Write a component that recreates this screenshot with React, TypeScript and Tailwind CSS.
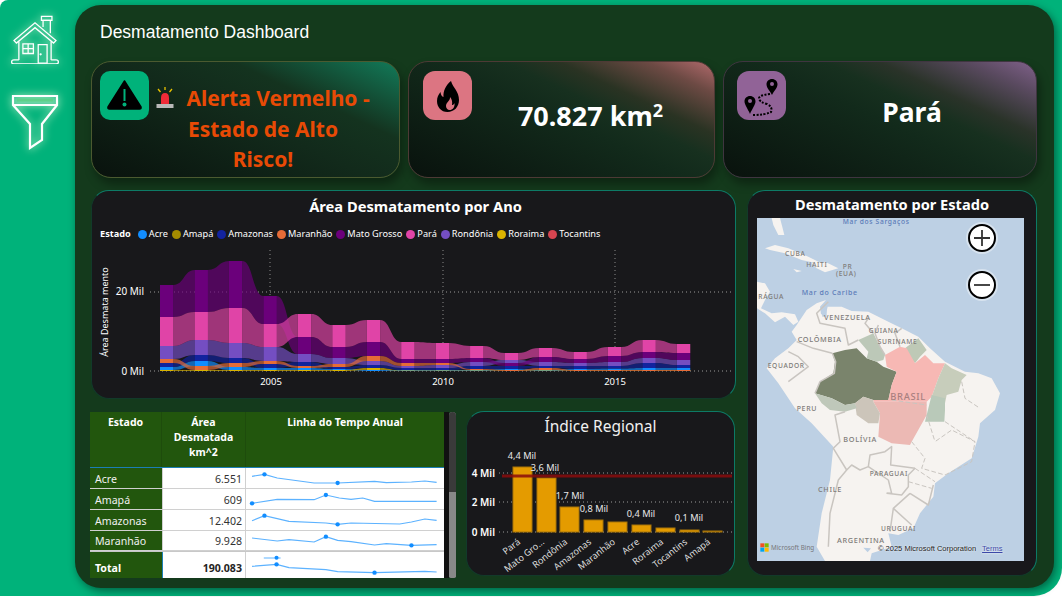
const SEGOE = 'font-["Noto_Sans","Open_Sans",sans-serif]';

const COLORS: Record<string, string> = {
  acre: '#118dff',
  amapa: '#a48b00',
  amazonas: '#12239e',
  maranhao: '#e66c37',
  matoGrosso: '#6b007b',
  para: '#e044a7',
  rondonia: '#744ec2',
  roraima: '#d9b300',
  tocantins: '#d64550',
};

const LEGEND = [
  ['Acre', 'bg-[#118dff]'],
  ['Amapá', 'bg-[#a48b00]'],
  ['Amazonas', 'bg-[#12239e]'],
  ['Maranhão', 'bg-[#e66c37]'],
  ['Mato Grosso', 'bg-[#6b007b]'],
  ['Pará', 'bg-[#e044a7]'],
  ['Rondônia', 'bg-[#744ec2]'],
  ['Roraima', 'bg-[#d9b300]'],
  ['Tocantins', 'bg-[#d64550]'],
];

// [top, bottom] in page pixels, one pair per year column
const BANDS: [string, [number, number][]][] = [
  ['acre', [[367, 370], [361, 366], [367, 370], [368, 370], [368, 370], [369, 370], [370, 371], [370, 371], [370, 371], [370, 371], [369, 370], [370, 371], [369, 370], [368.5, 370], [368, 370], [368, 370]]],
  ['roraima', [[370, 371], [370, 371], [370, 371], [370, 371], [370, 371], [370, 371], [368, 370], [370.5, 371], [370.5, 371], [370.5, 371], [370.5, 371], [370.5, 371], [370.5, 371], [370.5, 371], [370.5, 371], [370.5, 371]]],
  ['amazonas', [[363, 367], [355, 361], [358, 363], [364, 368], [362, 366], [367, 369], [365, 368], [368, 370], [368, 370], [366, 369], [366, 369], [366, 368], [366, 369], [366, 368.5], [363, 368], [365, 368]]],
  ['rondonia', [[346, 359], [340, 355], [343, 358], [347, 361], [354, 362], [358, 364], [361, 365], [366, 368], [365, 368], [362, 366], [360, 363], [362, 366], [363, 366], [362, 366], [358, 363], [360, 365]]],
  ['matoGrosso', [[285, 317], [270, 312], [261, 308], [296, 324], [337, 354], [347, 358], [342, 356], [359, 363], [359, 363], [358, 362], [363, 366], [357, 362], [359, 363], [356, 362], [352, 358], [353, 360]]],
  ['para', [[317, 346], [312, 340], [308, 343], [324, 347], [314, 337], [325, 347], [320, 342], [342, 359], [343, 359], [346, 358], [353, 360], [348, 357], [352, 359], [347, 356], [340, 352], [344, 353]]],
  ['maranhao', [[359, 363], [366, 370], [363, 367], [361, 364], [366, 368], [364, 367], [356, 361], [363, 366], [363, 365], [369, 370], [370, 371], [368, 370], [370, 371], [370, 371], [370, 371], [370, 371]]],
];

function RibbonChart() {
  const colX = (i: number) => 160 + i * 34.45;
  return (
    <svg viewBox="92 245 642 152" className="block h-[152px] w-[642px]">
      {[270, 443, 615].map((x) => (
        <line key={x} x1={x} x2={x} y1={250} y2={371} stroke="#8a8a8a" strokeWidth="1" strokeDasharray="1 3" />
      ))}
      {[292, 371].map((y) => (
        <line key={y} x1={150} x2={731} y1={y} y2={y} stroke="#9a9a9a" strokeWidth="1" strokeDasharray="1 3" />
      ))}
      {BANDS.map(([name, vals]) => (
        <g key={name} fill={COLORS[name]}>
          {vals.slice(0, -1).map((v, i) => {
            const n = vals[i + 1];
            const a = colX(i) + 13.5;
            const b = colX(i + 1);
            const m = (a + b) / 2;
            return (
              <path
                key={i}
                opacity="0.68"
                d={`M${a} ${v[0]}C${m} ${v[0]} ${m} ${n[0]} ${b} ${n[0]}L${b} ${n[1]}C${m} ${n[1]} ${m} ${v[1]} ${a} ${v[1]}Z`}
              />
            );
          })}
          {vals.map((v, i) => (
            <rect key={i} x={colX(i)} y={v[0]} width="13.5" height={v[1] - v[0]} />
          ))}
        </g>
      ))}
      <g fill="#ffffff" fontSize="10" fontFamily="'Noto Sans',sans-serif">
        <text x="144" y="295" textAnchor="end">20 Mil</text>
        <text x="144" y="375" textAnchor="end">0 Mil</text>
        <text x="271" y="385" textAnchor="middle" fontSize="9.5">2005</text>
        <text x="443" y="385" textAnchor="middle" fontSize="9.5">2010</text>
        <text x="615" y="385" textAnchor="middle" fontSize="9.5">2015</text>
        <text transform="translate(108 312) rotate(-90)" textAnchor="middle" fontSize="9">Área Desmata mento</text>
      </g>
    </svg>
  );
}

const BARS = [
  ['Pará', 513, 467],
  ['Mato Gro...', 537, 478],
  ['Rondônia', 560, 507],
  ['Amazonas', 584, 520],
  ['Maranhão', 608, 522],
  ['Acre', 632, 525],
  ['Roraima', 656, 528],
  ['Tocantins', 680, 530],
  ['Amapá', 703, 531],
] as const;

function RegionalChart() {
  return (
    <svg viewBox="467 442 267 133" className="block h-[133px] w-[267px]">
      {[473, 502, 532].map((y) => (
        <line key={y} x1={499} x2={733} y1={y} y2={y} stroke="#9a9a9a" strokeDasharray="1 3" />
      ))}
      {BARS.map(([name, x, y]) => (
        <rect key={name} x={x} y={y} width="19" height={532 - y} fill="#e49b00" stroke="#a87408" strokeWidth="1" />
      ))}
      <line x1={502} x2={732} y1={476} y2={476} stroke="#8a0c0c" strokeOpacity="0.85" strokeWidth="3" />
      <g fill="#ffffff" fontSize="10" fontFamily="'Noto Sans',sans-serif">
        <text x="495" y="477" textAnchor="end" fontWeight="600">4 Mil</text>
        <text x="495" y="506" textAnchor="end" fontWeight="600">2 Mil</text>
        <text x="495" y="536" textAnchor="end" fontWeight="600">0 Mil</text>
      </g>
      <g fill="#e8e8e8" fontSize="9.2" fontFamily="'Noto Sans',sans-serif">
        <text x="522" y="459" textAnchor="middle">4,4 Mil</text>
        <text x="545" y="471" textAnchor="middle">3,6 Mil</text>
        <text x="570" y="499" textAnchor="middle">1,7 Mil</text>
        <text x="594" y="512" textAnchor="middle">0,8 Mil</text>
        <text x="641" y="517" textAnchor="middle">0,4 Mil</text>
        <text x="689" y="521" textAnchor="middle">0,1 Mil</text>
      </g>
      <g fill="#dddddd" fontSize="9.2" fontFamily="'Noto Sans',sans-serif">
        {BARS.map(([name, x]) => (
          <text key={name} transform={`translate(${x + 8} 543) rotate(-38)`} textAnchor="end">{name}</text>
        ))}
      </g>
    </svg>
  );
}

const SPARKS = [
  { name: 'Acre', value: '6.551', top: 190, h: 21, dots: [[542, 209], [760, 235]], pts: '505,215 542,209 580,220 690,235 760,235 870,230 905,234 980,232 1020,229 1055,233' },
  { name: 'Amapá', value: '609', top: 253, h: 21, dots: [[505, 296], [725, 271]], pts: '505,296 580,284 690,285 725,271 765,280 800,284 835,280 870,290 980,290 1055,290' },
  { name: 'Amazonas', value: '12.402', top: 316, h: 21, dots: [[542, 333], [760, 359]], pts: '505,348 542,333 615,350 725,355 760,359 800,355 945,358 980,352 1020,343 1055,347' },
  { name: 'Maranhão', value: '9.928', top: 379, h: 20, dots: [[725, 396], [980, 422]], pts: '505,400 580,409 615,405 690,412 725,396 760,407 800,411 870,421 905,417 980,422 1055,420' },
];

function Spark({ top, h, pts, dots, extra }: { top: number; h: number; pts: string; dots: number[][]; extra?: boolean }) {
  return (
    <svg viewBox={`487 ${top} 590 ${h * 3}`} className="block w-full" height={h} preserveAspectRatio="none">
      {extra && <line x1="540" x2="590" y1="460" y2="460" stroke="#5cb2ff" strokeWidth="3" />}
      {extra && <circle cx="578" cy="459" r="6" fill="#118dff" />}
      <polyline points={pts} fill="none" stroke="#5cb2ff" strokeWidth="3.5" />
      {dots.map(([x, y]) => (
        <circle key={x} cx={x} cy={y} r="6.5" fill="#118dff" />
      ))}
    </svg>
  );
}

function DataTable() {
  return (
    <div className={`-ml-px mt-px flex h-[167px] w-[367px] ${SEGOE}`}>
      <div className="w-[354px] shrink-0">
        <div className="flex h-[56px] border-b border-[#1b7fb5] bg-[#22560d] text-center text-[10.5px] font-bold leading-[15px] text-white">
          <div className="w-[72px] border-r border-[#1e4c0c] pt-[3px]">Estado</div>
          <div className="w-[84px] border-r border-[#1e4c0c] pt-[3px]">Área Desmatada km^2</div>
          <div className="flex-1 pt-[3px]">Linha do Tempo Anual</div>
        </div>
        {SPARKS.map((s) => (
          <div key={s.name} className="flex border-b border-[#d0d0d0] bg-white text-[10.6px]" style={{ height: s.h }}>
            <div className="flex w-[72px] items-center bg-[#22560d] pl-[5px] pt-[3px] text-[#f0f0f0]">{s.name}</div>
            <div className="flex w-[84px] items-center justify-end border-r border-l border-[#d0d0d0] pr-[3px] pt-[3px] text-[#333333]">{s.value}</div>
            <div className="flex-1">
              <Spark top={s.top} h={s.h - 1} pts={s.pts} dots={s.dots} />
            </div>
          </div>
        ))}
        <div className="flex h-[27px] border-t border-[#c8c8c8] bg-white text-[10.6px] font-bold">
          <div className="flex w-[72px] items-center bg-[#22560d] pl-[5px] pt-[8px] text-white">Total</div>
          <div className="flex w-[84px] items-center justify-end border-r border-l border-[#1b7fb5] border-r-[#d0d0d0] pr-[3px] pt-[8px] text-[#252423]">190.083</div>
          <div className="flex-1">
            <Spark top={442} h={26} pts="505,485 578,479 615,489 725,495 760,501 870,504 1020,500 1055,502" dots={[[578, 479], [870, 504]]} extra />
          </div>
        </div>
      </div>
      <div className="h-[166px] w-[5px] bg-[#111111]" />
      <div className="flex h-[166px] w-[7px] flex-col overflow-hidden rounded-t-[6px] rounded-b-[3px] bg-[#888888]">
        <div className="h-[80px] bg-[#3a3a3a]" />
      </div>
    </div>
  );
}

const BORDER_LINES = [
  'M262 505L272 530L268 565L225 590L210 625',
  'M155 470L205 490L262 505',
  'M130 500L160 515L190 545L130 590',
  'M250 350L215 385L225 415L300 430L310 480L340 465',
  'M385 445L360 415L370 400',
  'M420 510L405 485L390 445L400 420',
  'M465 485L450 445L470 430',
  'M300 680L270 690L285 770L265 790L305 855L320 840L345 855L370 845L375 810L420 800L440 785L437 840L510 850',
  'M305 855L280 885L255 985L250 1085',
  'M370 845L430 885L440 925L425 925',
  'M425 925L470 930L490 905L490 870L510 850',
  'M495 925L445 970L435 1040',
  'M445 970L500 1020',
  'M495 925L550 960L565 900',
];

const DASH_LINES = [
  'M500 770L540 820L530 850L600 870L680 830L690 770L620 735L570 770',
  'M545 690L570 770M600 710L690 770M650 590L660 640L705 670',
  'M510 850L570 890M490 890L560 910',
  'M440 645L545 660',
];

function MapLabel({ x, y, children, size = 22, color = '#7f7c79' }: { x: number; y: number; children: string; size?: number; color?: string }) {
  return (
    <text x={x} y={y} fontSize={size} fill={color} fontWeight="500" letterSpacing="2" fontFamily="'Noto Sans',sans-serif">
      {children}
    </text>
  );
}

function BrazilMap() {
  return (
    <div className="relative ml-[9px] h-[343px] w-[267px] overflow-hidden bg-[#bdd0e4]">
      <svg viewBox="36 99 801 1029" className="block h-[343px] w-[267px]">
        <path
          fill="#f6f3f0"
          d="M155 420L185 375L215 355L243 345L225 365L228 388L242 390L248 365L290 365L320 378L370 380L400 395L430 410L470 430L520 455L555 490L600 530L660 560L700 565L740 580L765 625L750 675L705 715L700 755L680 820L610 865L570 895L565 935L525 985L505 1030L460 1050L430 1045L440 1085L380 1105L375 1128L240 1128L215 1085L230 985L255 885L265 785L200 715L150 670L100 595L65 550L90 520L130 490L155 465L140 440Z"
        />
        <path fill="#f6f3f0" d="M36 290L60 295L75 320L60 345L48 370L80 385L110 382L150 388L160 410L145 420L120 395L90 412L60 385L36 370Z" />
        <path fill="#f6f3f0" d="M60 190L90 180L130 190L190 215L240 240L170 225L120 205L75 195Z" />
        <path fill="#f6f3f0" d="M200 235L240 230L280 250L240 262L215 250Z" />
        <path fill="#f6f3f0" d="M80 99L105 99L118 150L100 150L85 120Z" />
        <path fill="#f6f3f0" d="M145 252L170 258L155 262Z" />
        <path fill="#bdd0e4" d="M355 1088L378 1090L368 1102Z" />
        <path fill="#bdd0e4" d="M230 380L245 370L245 395L232 395Z" />

        <path fill="#7a846c" d="M262 505L300 495L335 490L365 520L395 530L415 545L455 560L440 600L430 645L385 645L355 635L330 655L300 660L260 640L210 625L225 590L265 565L270 530Z" />
        <path fill="#bcc8b8" d="M340 465L385 445L405 485L420 510L415 525L395 530L365 520L370 500Z" />
        <path fill="#bec9b6" d="M480 490L520 460L545 495L525 515L510 535L490 510Z" />
        <path fill="#f7b8b4" d="M420 510L465 485L485 490L510 535L540 510L565 535L600 535L580 580L560 635L545 650L385 650L385 645L430 645L440 600L455 560L425 545Z" />
        <path fill="#ecb9b4" d="M385 650L545 650L545 690L500 770L495 780L440 775L400 755L405 685Z" />
        <path fill="#ccc5ba" d="M330 655L355 635L385 645L385 650L405 685L400 715L370 715L335 690Z" />
        <path fill="#bfc8ba" d="M210 625L260 640L300 660L330 655L335 670L300 680L255 675L230 655Z" />
        <path fill="#c7cdbb" d="M600 535L620 550L665 570L650 585L640 620L605 630L600 655L560 635L580 580Z" />
        <path fill="#b9c9b9" d="M560 630L600 640L600 675L598 710L540 710L545 690Z" />

        <g fill="none" stroke="#c9c5c0" strokeWidth="4.5" strokeLinejoin="round">
          {BORDER_LINES.map((d) => (
            <path key={d} d={d} />
          ))}
        </g>
        <g fill="none" stroke="#c9c5c0" strokeWidth="3" strokeDasharray="14 7">
          {DASH_LINES.map((d) => (
            <path key={d} d={d} />
          ))}
        </g>

        <MapLabel x={293} y={117} size={20} color="#5b7bb8">Mar dos Sargaços</MapLabel>
        <MapLabel x={170} y={329} size={21} color="#5b7bb8">Mar do Caribe</MapLabel>
        <MapLabel x={120} y={212} size={20}>CUBA</MapLabel>
        <MapLabel x={184} y={247} size={20}>HAITI</MapLabel>
        <MapLabel x={293} y={251} size={20}>PR</MapLabel>
        <MapLabel x={273} y={272} size={20}>(EUA)</MapLabel>
        <MapLabel x={40} y={342} size={20}>RÁGUA</MapLabel>
        <MapLabel x={237} y={406}>VENEZUELA</MapLabel>
        <MapLabel x={371} y={443} size={20}>GUIANA</MapLabel>
        <MapLabel x={398} y={477} size={20}>SURINAME</MapLabel>
        <MapLabel x={158} y={472}>COLÔMBIA</MapLabel>
        <MapLabel x={68} y={548} size={20}>EQUADOR</MapLabel>
        <MapLabel x={155} y={677} size={21}>PERU</MapLabel>
        <MapLabel x={436} y={645} size={28} color="#a87f7f">BRASIL</MapLabel>
        <MapLabel x={295} y={772}>BOLÍVIA</MapLabel>
        <MapLabel x={374} y={873} size={20}>PARAGUAI</MapLabel>
        <MapLabel x={219} y={922}>CHILE</MapLabel>
        <MapLabel x={408} y={1038} size={20}>URUGUAI</MapLabel>
        <MapLabel x={276} y={1073}>ARGENTINA</MapLabel>

        <rect x="46" y="1075" width="12" height="12" fill="#f25022" />
        <rect x="59" y="1075" width="12" height="12" fill="#7fba00" />
        <rect x="46" y="1088" width="12" height="12" fill="#00a4ef" />
        <rect x="59" y="1088" width="12" height="12" fill="#ffb900" />
        <text x="78" y="1095" fontSize="19" fill="#77777a" fontFamily="'Noto Sans',sans-serif">Microsoft Bing</text>
      </svg>
      <div className="absolute bottom-[6px] left-[121px] flex gap-[6px] whitespace-nowrap font-['Liberation_Sans',sans-serif] text-[7.500px] leading-[12px] text-[#222222] [text-shadow:0_0_2px_#ffffff]">
        <span>© 2025 Microsoft Corporation</span>
        <span className="text-[#3c49a8] underline">Terms</span>
      </div>
      <MapButton className="top-[6px]" d="M6 14H22M14 6V22" />
      <MapButton className="top-[53px]" d="M6 14H22" />
    </div>
  );
}

function MapButton({ className, d }: { className: string; d: string }) {
  return (
    <div className={`absolute left-[211px] flex h-[28px] w-[28px] items-center justify-center rounded-full border-2 border-black bg-white shadow-[0_0_0_2px_rgba(255,255,255,0.4)] ${className}`}>
      <svg viewBox="0 0 28 28" className="h-[28px] w-[28px] shrink-0">
        <path d={d} stroke="#333333" strokeWidth="1.8" fill="none" />
      </svg>
    </div>
  );
}

function HomeIcon() {
  return (
    <svg viewBox="0 0 62 62" className="h-[50px] w-[50px] [filter:drop-shadow(0_0_4px_#e4ffd8)]" fill="none" stroke="#ffffff" strokeWidth="1.6">
      <path d="M5 33L31 11L57 33L54 36L31 17L8 36Z" />
      <path d="M41 16V8H50V24" />
      <path d="M39 3H52V8H39Z" />
      <path d="M11 34V57M51 34V57" />
      <path d="M11 57H5Q2 57 2 59.500Q2 62 5 62H57Q60 62 60 59.500Q60 57 57 57H51" />
      <path d="M16 37H29V49H16ZM22.500 37V49M16 43H29" />
      <path d="M35 38H46V61H35Z" />
      <circle cx="38" cy="50" r="0.6" fill="#ffffff" />
    </svg>
  );
}

function FunnelIcon() {
  return (
    <svg viewBox="0 0 48 56" className="h-[56px] w-[48px] [filter:drop-shadow(0_0_4px_#e4ffd8)]" fill="none" stroke="#ffffff" strokeWidth="2.2">
      <path d="M2 2H46V11L31 30V46L19 54V30L2 11Z" />
      <path d="M2 11H46" />
      <path d="M6 6H42" stroke="#5fd08a" strokeWidth="3" />
    </svg>
  );
}

function AlertIcon() {
  return (
    <svg viewBox="0 0 49 49" className="h-[49px] w-[49px]">
      <path d="M24.500 10L41 36Q41.500 38 39.500 38H9.500Q7.500 38 8 36Z" fill="#000000" stroke="#000000" strokeWidth="1.500" strokeLinejoin="round" />
      <path d="M24.500 18V30" stroke="#00b27a" strokeWidth="2" />
      <circle cx="24.500" cy="33.500" r="2" fill="#00b27a" />
    </svg>
  );
}

function FlameIcon() {
  return (
    <svg viewBox="0 0 49 49" className="h-[49px] w-[49px]">
      <path
        fill="#000000"
        fillRule="evenodd"
        d="M28 10C30 17 36 20 36 29C36 36 31 41 24.500 41C18 41 14 36 14 30C14 26 15.500 23.500 17.500 21C17.800 24 19 25.500 20.500 26C20 20 23 14 28 10ZM27 26C27.500 30 23 31 23 35C23 37 24.500 39 26.500 39C29.500 39 32 36.500 31.500 32C31 33.500 30 34 29 34C29.500 31 29 28 27 26Z"
      />
    </svg>
  );
}

function RouteIcon() {
  return (
    <svg viewBox="0 0 49 49" className="h-[49px] w-[49px]">
      <path d="M35 8C31.800 8 29.500 10.300 29.500 13.300C29.500 17 33 20 35 24C37 20 40.500 17 40.500 13.300C40.500 10.300 38.200 8 35 8Z" fill="#000000" />
      <circle cx="35" cy="13" r="2" fill="#916397" />
      <path d="M13 25C9.800 25 7.500 27.300 7.500 30.300C7.500 34 11 38 13 43C15 38 18.500 34 18.500 30.300C18.500 27.300 16.200 25 13 25Z" fill="#000000" />
      <circle cx="13" cy="30" r="2" fill="#916397" />
      <path d="M33 23Q23 24 22 27Q22 31 30 33Q36 36 34 41Q28 44 16 44" fill="none" stroke="#000000" strokeWidth="2" strokeDasharray="2 1.500" />
    </svg>
  );
}

function Siren() {
  return (
    <svg viewBox="0 0 18 22" className="mr-[12px] inline-block h-[22px] w-[18px] align-[-3px]">
      <path d="M5 17V11Q5 6 9 6Q13 6 13 11V17Z" fill="#ef2b38" />
      <rect x="0.500" y="17" width="17" height="4" fill="#b9b9b9" />
      <path d="M9 0V3M2 2L4.500 5M16 2L13.500 5" stroke="#e8c100" strokeWidth="1.300" />
    </svg>
  );
}

export default function App() {
  return (
    <div className="h-[597px] w-[1062px] overflow-hidden bg-white">
      <div className="flex h-[596px] w-[1062px] rounded-tl-[8px] rounded-br-[28px] bg-[#00b27a]">
        <aside className="flex w-[75px] shrink-0 flex-col items-center pt-[14px]">
          <div className="-ml-[5px]">
            <HomeIcon />
          </div>
          <div className="mt-[30px] -ml-[5px]">
            <FunnelIcon />
          </div>
        </aside>

        <main className="mt-[5px] h-[583px] w-[979px] rounded-[26px] bg-[#143a1c] pl-[16px] pr-[17px] shadow-[2px_3px_8px_rgba(0,0,0,0.45)]">
          <h1 className="ml-[9px] pt-[17px] font-['Liberation_Sans',sans-serif] text-[17.5px] leading-[21px] text-white">
            Desmatamento Dashboard
          </h1>

          <div className="mt-[18px] flex gap-[8px]">
            <section className="flex h-[117px] w-[309px] rounded-[20px] border border-[#4b5a30] bg-[linear-gradient(205deg,#127a59_0%,#14331f_30%,#122a1b_50%,#09120d_100%)] pl-[8px] pt-[9px] shadow-[3px_6px_10px_rgba(0,0,0,0.35)]">
              <div className="h-[49px] w-[49px] shrink-0 rounded-[10px] bg-[#00b27a]">
                <AlertIcon />
              </div>
              <p className={`w-[228px] pt-[12px] text-center text-[21px] font-bold leading-[30.500px] text-[#e84a05] ${SEGOE}`}>
                <Siren />
                Alerta Vermelho -<br />Estado de Alto<br />Risco!
              </p>
            </section>

            <section className="flex h-[117px] w-[307px] rounded-[20px] border border-[#4d3a35] bg-[linear-gradient(205deg,#b26a6c_0%,#6d4a44_12%,#2a3323_28%,#17301f_38%,#122a1b_50%,#09120d_100%)] pl-[14px] pt-[9px] shadow-[3px_6px_10px_rgba(0,0,0,0.35)]">
              <div className="h-[49px] w-[49px] shrink-0 rounded-[12px] bg-[#dc7582]">
                <FlameIcon />
              </div>
              <p className={`flex-1 pt-[27px] pr-[5px] text-center text-[27px] font-bold leading-[36px] text-white ${SEGOE}`}>
                70.827 km<sup className="text-[18px]">2</sup>
              </p>
            </section>

            <section className="flex h-[117px] w-[314px] rounded-[20px] border border-[#3f3540] bg-[linear-gradient(205deg,#80618a_0%,#5a4a60_12%,#2a3329_28%,#17301f_38%,#122a1b_50%,#09120d_100%)] pl-[13px] pt-[9px] shadow-[3px_6px_10px_rgba(0,0,0,0.35)]">
              <div className="h-[49px] w-[49px] shrink-0 rounded-[12px] bg-[#916397]">
                <RouteIcon />
              </div>
              <p className={`flex-1 pl-[2px] pt-[23px] text-center text-[26.500px] font-bold leading-[36px] text-white ${SEGOE}`}>
                Pará
              </p>
            </section>
          </div>

          <div className="mt-[12px] flex gap-[11px]">
            <div className="w-[645px] shrink-0">
              <section className="h-[209px] rounded-[18px] border border-[#123a2a] border-t-[#0d7a66] border-r-[#0d7a66] bg-[#18181b] pt-[5px]">
                <h2 className={`pl-[4px] text-center text-[14.700px] font-bold leading-[20px] text-white ${SEGOE}`}>
                  Área Desmatamento por Ano
                </h2>
                <div className={`mt-[11px] ml-[8px] flex h-[14px] items-center gap-[4px] text-[9.200px] leading-[14px] text-white ${SEGOE}`}>
                  <span className="mr-[3px] font-bold">Estado</span>
                  {LEGEND.map(([name, color]) => (
                    <span key={name} className="flex items-center gap-[2px] whitespace-nowrap">
                      <i className={`h-[9px] w-[9px] rounded-full ${color}`} />
                      {name}
                    </span>
                  ))}
                </div>
                <div className="mt-[4px]">
                  <RibbonChart />
                </div>
              </section>

              <div className="mt-[12px] flex gap-[9px]">
                <DataTable />
                <section className="h-[165px] w-[269px] rounded-[18px] border border-[#123a2a] border-t-[#0d7a66] border-r-[#0d7a66] bg-[#18181b] pt-[4px]">
                  <h2 className={`text-center text-[15.500px] leading-[21px] text-[#f0f0f0] ${SEGOE}`}>Índice Regional</h2>
                  <div className="mt-[5px]">
                    <RegionalChart />
                  </div>
                </section>
              </div>
            </div>

            <section className="h-[386px] w-[290px] rounded-[18px] border border-[#123a2a] border-t-[#0d7a66] border-r-[#0d7a66] bg-[#18181b] pt-[3px]">
              <h2 className={`text-center text-[14.600px] font-bold leading-[20px] text-white ${SEGOE}`}>Desmatamento por Estado</h2>
              <div className="mt-[4px]">
                <BrazilMap />
              </div>
            </section>
          </div>
        </main>
      </div>
    </div>
  );
}
